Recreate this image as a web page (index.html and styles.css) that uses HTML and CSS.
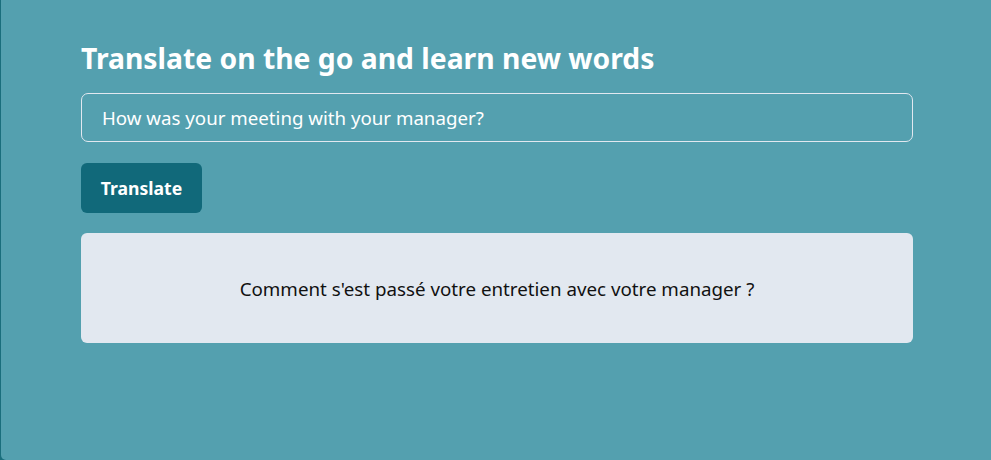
FILE: index.html
```html
<!DOCTYPE html>
<html lang="en">
<head>
<meta charset="utf-8">
<title>Translate</title>
<link rel="stylesheet" href="styles.css">
</head>
<body>
<main class="app">
  <div class="content">
    <h1 class="title">Translate on the go and learn new words</h1>
    <input class="source" type="text" value="How was your meeting with your manager?">
    <div class="actions"><button class="btn" type="button">Translate</button></div>
    <div class="result"><p class="result-text">Comment s'est passé votre entretien avec votre manager ?</p></div>
  </div>
</main>
</body>
</html>
```

FILE: styles.css
```css
html, body {
  margin: 0;
  height: 100%;
}
body {
  background: #1a6e7c;
  font-family: "Noto Sans", "Open Sans", sans-serif;
}
.app {
  margin-left: 1px;
  height: 100%;
  background: #54a0af;
  border-bottom-left-radius: 5px;
  box-sizing: border-box;
  padding: 40px 78px 0 80px;
}
.content {
  display: flex;
  flex-direction: column;
}
.title {
  margin: 0;
  color: #ffffff;
  font-size: 28.3px;
  font-weight: 700;
  line-height: 36px;
}
.source {
  margin-top: 17px;
  height: 49px;
  box-sizing: border-box;
  border: 1px solid #e2e8f0;
  border-radius: 7px;
  background: transparent;
  color: #ffffff;
  font-family: inherit;
  font-size: 18.7px;
  padding: 0 20px;
  outline: none;
}
.actions {
  margin-top: 21px;
  display: flex;
}
.btn {
  height: 50px;
  width: 121px;
  border: 0;
  border-radius: 6px;
  background: #11697a;
  color: #ffffff;
  font-family: inherit;
  font-size: 17.6px;
  font-weight: 700;
}
.result {
  margin-top: 20px;
  height: 110px;
  background: #e2e8f0;
  border-radius: 6px;
  display: flex;
  align-items: center;
  justify-content: center;
}
.result-text {
  margin: 0;
  color: #111111;
  font-size: 18.75px;
}
```
